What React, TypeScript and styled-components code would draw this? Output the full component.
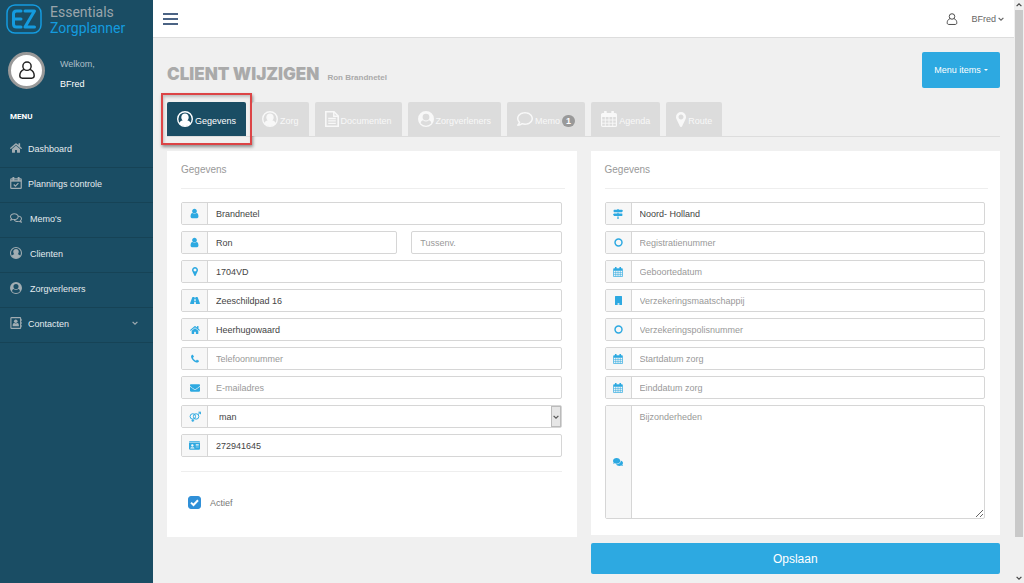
import React from 'react';
import styled, { createGlobalStyle, css } from 'styled-components';
import { FaHome, FaEnvelope, FaIdCard, FaMapSigns, FaComments, FaRegComments, FaRegComment } from 'react-icons/fa';

const sans = "'Liberation Sans', Arial, sans-serif";
const navy = '#1a4d64';
const blue = '#2da9e1';
const line = '#d6d6d6';

const GlobalStyle = createGlobalStyle`
  *, *::before, *::after { box-sizing: border-box; }
  body { margin: 0; background: #f0f0f0; font: 9px/12px ${sans}; color: #555; }
  button, input, select, textarea { font: inherit; color: inherit; margin: 0; }
  h1, h2, p { margin: 0; padding: 0; }
  a { color: inherit; text-decoration: none; }
  svg { display: block; flex: none; }
`;

/* ---------- icons ---------- */

type IconProps = { size?: number };

const UserIcon = ({ size = 11 }: IconProps) => (
  <svg width={size} height={size} viewBox="0 0 1792 1792" fill="currentColor">
    <path d="M1536 1399q0 109-62.5 187t-150.5 78h-854q-88 0-150.5-78t-62.5-187q0-85 8.5-160.5t31.5-152 58.5-131 94-89 134.5-34.5q131 128 313 128t313-128q76 0 134.5 34.5t94 89 58.5 131 31.5 152 8.5 160.5zm-256-887q0 159-112.5 271.5t-271.5 112.5-271.5-112.5-112.5-271.5 112.5-271.5 271.5-112.5 271.5 112.5 112.5 271.5z" />
  </svg>
);

const PinIcon = ({ size = 9 }: IconProps) => (
  <svg width={Math.round(size * 0.66)} height={size} viewBox="384 128 1024 1536" fill="currentColor">
    <path d="M1152 640q0-106-75-181t-181-75-181 75-75 181 75 181 181 75 181-75 75-181zm256 0q0 109-33 179l-364 774q-16 33-47.5 52t-67.5 19-67.5-19-46.5-52l-365-774q-33-70-33-179 0-212 150-362t362-150 362 150 150 362z" />
  </svg>
);

const RoadIcon = ({ size = 10 }: IconProps) => (
  <svg width={size} height={size - 1} viewBox="0 0 20 16" fill="currentColor">
    <path fillRule="evenodd" d="M5.500 1h3.700L9 3.500h2L10.800 1h3.700q.6 0 .9.700l4.400 11.800q.5 1.500-.8 1.500h-7.200l-.3-4.500H8.500L8.200 15H1q-1.300 0-.8-1.500L4.600 1.700Q4.900 1 5.500 1zM8.900 5.200L8.600 8.800h2.800L11.100 5.200z" />
  </svg>
);

const PhoneIcon = ({ size = 10 }: IconProps) => (
  <svg width={size} height={size} viewBox="0 0 1792 1792" fill="currentColor">
    <path d="M1600 1240q0 27-10 70.5t-21 68.5q-21 50-122 106-94 51-186 51-27 0-52.5-3.5t-57.5-12.5-47.5-14.5-55.5-20.5-49-18q-98-35-175-83-128-79-264.5-215.5t-215.5-264.5q-48-77-83-175-3-9-18-49t-20.5-55.5-14.5-47.5-12.5-57.5-3.5-52.5q0-92 51-186 56-101 106-122 25-11 68.5-21t70.5-10q14 0 21 3 18 6 53 76 11 19 30 54t35 63.5 31 53.5q3 4 17.5 25t21.5 35.5 7 28.5q0 20-28.5 50t-62 55-62 53-28.5 46q0 9 5 22.5t8.5 20.5 14 24 11.5 19q76 137 174 235t235 174q2 1 19 11.5t24 14 20.5 8.5 22.5 5q18 0 46-28.5t53-62 55-62 50-28.5q14 0 28.5 7t35.5 21.5 25 17.5q25 15 53.5 31t63.5 35 54 30q70 35 76 53 3 7 3 21z" />
  </svg>
);

const CalendarIcon = ({ size = 10 }: IconProps) => (
  <svg width={size} height={size} viewBox="0 0 16 16" fill="none" stroke="currentColor">
    <rect x="0.6" y="2.6" width="14.8" height="12.8" rx="1" strokeWidth="1.2" />
    <path d="M1 3h14v3H1z" fill="currentColor" stroke="none" />
    <path d="M4.3 6v9M8 6v9M11.7 6v9M1 9h14M1 12.2h14" strokeWidth="0.9" />
    <path d="M4.4 0.8v3.2M11.6 0.8v3.2" strokeWidth="2.6" strokeLinecap="round" />
  </svg>
);

const CalendarCheckIcon = ({ size = 12 }: IconProps) => (
  <svg width={size} height={size} viewBox="0 0 16 16" fill="none" stroke="currentColor">
    <rect x="1" y="2.6" width="14" height="12.6" rx="1" strokeWidth="1.6" />
    <path d="M1 5.2h14" strokeWidth="2" />
    <path d="M4.5 1v3M11.5 1v3" strokeWidth="2.6" strokeLinecap="round" />
    <path d="M5 10l2.2 2.3L11.2 8.2" strokeWidth="1.6" />
  </svg>
);

const UserRingIcon = ({ size = 16 }: IconProps) => (
  <svg width={size} height={size} viewBox="0 0 16 16" fill="currentColor">
    <circle cx="8" cy="8" r="7.3" fill="none" stroke="currentColor" strokeWidth="1.4" />
    <path d="M8 2.6c2.200 0 3.700 1.600 3.700 3.700 0 1.300-.5 2.400-1.300 3.200 1.900.3 3 1.300 3.400 2.900A7 7 0 0 1 8 14.900a7 7 0 0 1-5.800-2.500c.4-1.600 1.500-2.600 3.400-2.900C4.800 8.700 4.300 7.600 4.300 6.300c0-2.100 1.500-3.700 3.700-3.700z" />
  </svg>
);

const UserDiscIcon = ({ size = 16 }: IconProps) => (
  <svg width={size} height={size} viewBox="0 0 16 16" fill="currentColor">
    <path
      fillRule="evenodd"
      d="M8 0a8 8 0 1 1 0 16A8 8 0 0 1 8 0zM8 2.700a3.400 3.400 0 1 0 0 6.800 3.400 3.400 0 0 0 0-6.800zM5 9.300C3.500 9.600 2.900 10.800 2.700 12.300a6.900 6.900 0 0 0 10.600 0c-.2-1.500-.8-2.700-2.300-3a4.600 4.600 0 0 1-6 0z"
    />
  </svg>
);

const ContactBookIcon = ({ size = 12 }: IconProps) => (
  <svg width={size} height={size} viewBox="0 0 16 16" fill="none" stroke="currentColor">
    <rect x="1.2" y="0.8" width="13" height="14.4" rx="1" strokeWidth="1.5" />
    <path d="M15.300 3v2M15.300 7v2M15.300 11v2" strokeWidth="1" />
    <circle cx="7.700" cy="5.600" r="2.400" fill="currentColor" stroke="none" />
    <path d="M3.500 12.300c0-2.900.8-4.300 2-4.300 1.300.8 3.100.8 4.400 0 1.200 0 2 1.400 2 4.300z" fill="currentColor" stroke="none" />
  </svg>
);

const DocumentIcon = ({ size = 16 }: IconProps) => (
  <svg width={Math.round(size * 0.88)} height={size} viewBox="0 0 14 16" fill="none" stroke="currentColor">
    <path d="M0.800 0.800h8.200l4.200 4.200v10.200H0.800z" strokeWidth="1.600" />
    <path d="M8.800 0.800v4.400h4.400" strokeWidth="1.500" />
    <path d="M3.200 7.500h7.600M3.200 9.900h7.600M3.200 12.300h7.600" strokeWidth="1.300" />
  </svg>
);

const RingIcon = ({ size = 9 }: IconProps) => (
  <svg width={size} height={size} viewBox="0 0 16 16" fill="none" stroke="currentColor">
    <circle cx="8" cy="8" r="6.2" strokeWidth="2.6" />
  </svg>
);

const TabletIcon = ({ size = 9 }: IconProps) => (
  <svg width={size - 2} height={size} viewBox="0 0 14 18" fill="currentColor">
    <path fillRule="evenodd" d="M1 0h12q1 0 1 1v16q0 1-1 1H1q-1 0-1-1V1q0-1 1-1zM5.200 14.500v3h3.600v-3z" />
  </svg>
);

const GenderIcon = ({ size = 12 }: IconProps) => (
  <svg width={size} height={size} viewBox="0 0 22 20" fill="none" stroke="currentColor" strokeWidth="1.8">
    <circle cx="7" cy="9" r="5" />
    <circle cx="13" cy="9" r="5" />
    <path d="M7 14v5M4.500 16.700h5M16.500 5.500L21 1.200M17.300 1.200H21v3.700" />
  </svg>
);

const PersonOutlineIcon = ({ size = 12 }: IconProps) => (
  <svg width={size} height={size} viewBox="0 0 20 20" fill="none" stroke="currentColor" strokeWidth="1.6">
    <circle cx="10" cy="5.8" r="4.6" />
    <path d="M6.600 9.300C3.500 10.700 2 13.200 2 16.200c0 2 1 2.900 2.800 2.900h10.400c1.800 0 2.800-.9 2.800-2.900 0-3-1.500-5.500-4.600-6.900" />
  </svg>
);

const ChevronIcon = ({ size = 6 }: IconProps) => (
  <svg width={size} height={size} viewBox="0 0 6 6" fill="none" stroke="currentColor" strokeWidth="1.2">
    <path d="M0.600 1.800L3 4.200 5.400 1.800" />
  </svg>
);

const CheckIcon = () => (
  <svg width="9" height="9" viewBox="0 0 9 9" fill="none" stroke="#fff" strokeWidth="2">
    <path d="M1 4.600L3.500 7 8 2.200" />
  </svg>
);

const LogoMark = () => (
  <svg width="36" height="31" viewBox="0 0 36 31" fill="none" stroke="#149bdf" strokeLinejoin="round" strokeLinecap="round">
    <rect x="1" y="1" width="34" height="28" rx="8" strokeWidth="1.5" />
    <path d="M15 7H10.500Q7.500 7 7.500 10V20Q7.500 23 10.500 23H15M8 15H15" strokeWidth="3" />
    <path d="M19 7H28.500L19 23H28.500" strokeWidth="3" />
  </svg>
);

/* ---------- shell ---------- */

const Shell = styled.div`
  display: flex;
  min-height: 100vh;
`;

const Sidebar = styled.aside`
  flex: 0 0 153px;
  background: ${navy};
  color: #e4ecef;
`;

const Brand = styled.a`
  display: flex;
  gap: 8px;
  height: 40px;
  padding: 4px 0 0 6px;
`;

const BrandText = styled.span<{ $accent?: boolean }>`
  display: block;
  font: 14px/16px Roboto, sans-serif;
  color: ${p => (p.$accent ? '#149bdf' : '#9aa5ab')};
`;

const Profile = styled.div`
  display: flex;
  align-items: center;
  gap: 15px;
  height: 60px;
  padding: 0 8px;
`;

const Avatar = styled.span`
  display: grid;
  place-items: center;
  width: 37px;
  height: 37px;
  border: 3px solid #999;
  border-radius: 50%;
  background: #fff;
  color: #222;
`;

const Welcome = styled.p`
  line-height: 20px;
  padding-top: 7px;
  color: #aebfc8;
  strong { display: block; font-weight: 400; color: #fff; }
`;

const MenuTitle = styled.h2`
  height: 33px;
  padding-left: 10px;
  font: 700 8px/33px Roboto, sans-serif;
  color: #fff;
`;

const MenuLink = styled.a<{ $wide?: boolean }>`
  display: flex;
  align-items: center;
  gap: ${p => (p.$wide ? 8 : 6)}px;
  height: 35px;
  padding: 0 15px 2px 10px;
  border-bottom: 1px solid #164356;
  svg { color: #a2adb2; margin-bottom: 2px; }
  svg:last-child { margin-left: auto; }
`;

const Page = styled.div`
  flex: 1;
  min-width: 0;
`;

const TopBar = styled.header`
  display: flex;
  align-items: center;
  height: 38px;
  padding: 0 10px;
  border-bottom: 1px solid #ddd;
  background: #fff;
`;

const Burger = styled.button`
  display: grid;
  gap: 3px;
  width: 15px;
  padding: 0;
  border: 0;
  background: none;
  span { height: 2px; background: #4b6384; }
`;

const Account = styled.a`
  display: flex;
  align-items: center;
  gap: 2px;
  margin-left: 13px;
  color: #666;
`;

const AccountIcon = styled.span`
  margin-left: auto;
  color: #444;
`;

const Content = styled.main`
  padding: 14px 14px 8px;
`;

const Heading = styled.div`
  display: flex;
  justify-content: space-between;
  height: 50px;
`;

const Title = styled.h1`
  display: flex;
  align-items: baseline;
  gap: 8px;
  padding-top: 12px;
  font: 900 17px/20px Inter, sans-serif;
  color: #aaa;
  small { font: 700 8px/10px ${sans}; }
`;

const MenuButton = styled.button`
  display: flex;
  align-items: center;
  justify-content: center;
  gap: 3px;
  width: 78px;
  height: 36px;
  border: 0;
  border-radius: 2px;
  background: ${blue};
  color: #fff;
  &::after {
    content: '';
    border: 2px solid transparent;
    border-top-color: #fff;
    border-bottom: 0;
  }
`;

const Tabs = styled.nav`
  display: flex;
  gap: 6px;
  border-bottom: 1px solid #ddd;
`;

const TabItem = styled.div`
  position: relative;
`;

const Tab = styled.a<{ $active?: boolean }>`
  display: flex;
  align-items: flex-end;
  gap: 2px;
  height: 34px;
  padding: 0 10px 9px;
  border-radius: 2px 2px 0 0;
  background: ${p => (p.$active ? navy : '#dcdcdc')};
  color: ${p => (p.$active ? '#fff' : '#f8f8f8')};
  line-height: 11px;
`;

const Highlight = styled.span`
  position: absolute;
  inset: -9px -6px;
  border: 2px solid #dc4446;
  box-shadow: 1px 2px 3px rgba(0, 0, 0, 0.4), inset 1px 2px 3px rgba(0, 0, 0, 0.2);
  pointer-events: none;
`;

const Count = styled.span`
  min-width: 13px;
  border-radius: 6px;
  background: #999;
  color: #fff;
  font-weight: 700;
  line-height: 12px;
  text-align: center;
`;

const Columns = styled.form`
  display: grid;
  grid-template-columns: 1fr 1fr;
  align-items: start;
  gap: 14px;
  padding-top: 14px;
`;

const Panel = styled.section<{ $end?: number }>`
  padding: 0 15px ${p => p.$end ?? 16}px 14px;
  background: #fff;
`;

const PanelTitle = styled.h2`
  height: 38px;
  border-bottom: 1px solid #eee;
  margin: 0 -3px 13px 0;
  font: 10px/38px ${sans};
  color: #999;
`;

const Fields = styled.div`
  display: grid;
  gap: 6px;
`;

const Pair = styled.div`
  display: grid;
  grid-template-columns: 216fr 150fr;
  gap: 14px;
`;

const Group = styled.label`
  position: relative;
  display: flex;
  min-height: 23px;
  border: 1px solid ${line};
  border-radius: 2px;
  background: #fff;
`;

const AddOn = styled.span`
  display: grid;
  place-items: center;
  flex: 0 0 26px;
  border-right: 1px solid ${line};
  background: #f7f7f7;
  color: ${blue};
`;

const control = css`
  flex: 1;
  min-width: 0;
  border: 0;
  outline: 0;
  background: none;
  color: #444;
  &::placeholder { color: #999; opacity: 1; }
`;

const Input = styled.input`
  ${control}
  padding: 0 8px;
`;

const Select = styled.select`
  ${control}
  appearance: none;
  padding: 0 11px;
`;

const SelectArrow = styled.span`
  position: absolute;
  inset: 0 0 0 auto;
  display: grid;
  place-items: center;
  width: 10px;
  border: 1px solid #bbb;
  background: #e6e6e6;
  color: #555;
  pointer-events: none;
`;

const TextArea = styled.textarea`
  ${control}
  height: 112px;
  padding: 5px 8px;
  resize: vertical;
`;

const CheckRow = styled.label`
  display: flex;
  align-items: center;
  gap: 9px;
  margin-top: 14px;
  padding: 24px 7px 0;
  border-top: 1px solid #eee;
  color: #777;
`;

const CheckBox = styled.span`
  position: relative;
  width: 13px;
  height: 13px;
  input {
    display: block;
    appearance: none;
    width: 13px;
    height: 13px;
    border-radius: 3px;
    background: #fff;
    border: 1px solid #bbb;
  }
  input:checked { background: #3090d8; border-color: #3090d8; }
  svg { position: absolute; inset: 2px; pointer-events: none; }
  input:not(:checked) + svg { display: none; }
`;

const SaveButton = styled.button`
  width: 100%;
  height: 31px;
  margin-top: 8px;
  border: 0;
  border-radius: 2px;
  background: ${blue};
  color: #fff;
  font-size: 12px;
`;

const ScrollRail = styled.div`
  display: flex;
  flex-direction: column;
  align-items: center;
  flex: 0 0 10px;
  padding: 2px 0;
  background: #f0f0f0;
  color: #444;
`;

const ScrollThumb = styled.span`
  flex: 0 0 91%;
  width: 8px;
  margin: 2px 0 auto;
  background: #c9c9c9;
`;

const Flip = styled.span`
  transform: rotate(180deg);
`;

/* ---------- data ---------- */

const menu = [
  { label: 'Dashboard', icon: <FaHome size={12} /> },
  { label: 'Plannings controle', icon: <CalendarCheckIcon /> },
  { label: "Memo's", icon: <FaRegComments size={12} />, wide: true },
  { label: 'Clienten', icon: <UserRingIcon size={12} />, wide: true },
  { label: 'Zorgverleners', icon: <UserDiscIcon size={12} />, wide: true },
  { label: 'Contacten', icon: <ContactBookIcon />, more: true },
];

const tabs = [
  { label: 'Gegevens', icon: <UserRingIcon />, active: true },
  { label: 'Zorg', icon: <UserRingIcon /> },
  { label: 'Documenten', icon: <DocumentIcon /> },
  { label: 'Zorgverleners', icon: <UserDiscIcon /> },
  { label: 'Memo', icon: <FaRegComment size={16} />, count: 1 },
  { label: 'Agenda', icon: <CalendarIcon size={16} /> },
  { label: 'Route', icon: <PinIcon size={15} /> },
];

type FieldProps = { name: string; icon?: React.ReactNode; value?: string };

const Field = ({ name, icon, value }: FieldProps) => (
  <Group>
    {icon && <AddOn>{icon}</AddOn>}
    <Input aria-label={name} placeholder={name} defaultValue={value} />
  </Group>
);

export default function App() {
  return (
    <>
      <GlobalStyle />
      <Shell>
        <Sidebar>
          <Brand href="#">
            <LogoMark />
            <span>
              <BrandText>Essentials</BrandText>
              <BrandText $accent>Zorgplanner</BrandText>
            </span>
          </Brand>
          <Profile>
            <Avatar><PersonOutlineIcon size={18} /></Avatar>
            <Welcome>Welkom,<strong>BFred</strong></Welcome>
          </Profile>
          <MenuTitle>MENU</MenuTitle>
          <nav>
            {menu.map(m => (
              <MenuLink key={m.label} href="#" $wide={m.wide}>
                {m.icon}
                <span>{m.label}</span>
                {m.more && <ChevronIcon />}
              </MenuLink>
            ))}
          </nav>
        </Sidebar>
        <Page>
          <TopBar>
            <Burger type="button" aria-label="Menu"><span /><span /><span /></Burger>
            <AccountIcon><PersonOutlineIcon /></AccountIcon>
            <Account href="#">BFred <ChevronIcon /></Account>
          </TopBar>
          <Content>
            <Heading>
              <Title>CLIENT WIJZIGEN <small>Ron Brandnetel</small></Title>
              <MenuButton type="button">Menu items</MenuButton>
            </Heading>
            <Tabs>
              {tabs.map(t => (
                <TabItem key={t.label}>
                  <Tab href="#" $active={t.active}>
                    {t.icon}
                    <span>{t.label}</span>
                    {t.count && <Count>{t.count}</Count>}
                  </Tab>
                  {t.active && <Highlight />}
                </TabItem>
              ))}
            </Tabs>
            <Columns onSubmit={e => e.preventDefault()}>
              <Panel $end={28}>
                <PanelTitle>Gegevens</PanelTitle>
                <Fields>
                  <Field name="Achternaam" icon={<UserIcon />} value="Brandnetel" />
                  <Pair>
                    <Field name="Voornaam" icon={<UserIcon />} value="Ron" />
                    <Field name="Tussenv." />
                  </Pair>
                  <Field name="Postcode" icon={<PinIcon />} value="1704VD" />
                  <Field name="Adres" icon={<RoadIcon />} value="Zeeschildpad 16" />
                  <Field name="Woonplaats" icon={<FaHome size={10} />} value="Heerhugowaard" />
                  <Field name="Telefoonnummer" icon={<PhoneIcon />} />
                  <Field name="E-mailadres" icon={<FaEnvelope size={10} />} />
                  <Group>
                    <AddOn><GenderIcon /></AddOn>
                    <Select aria-label="Geslacht" defaultValue="man">
                      <option>man</option>
                      <option>vrouw</option>
                    </Select>
                    <SelectArrow><ChevronIcon /></SelectArrow>
                  </Group>
                  <Field name="BSN" icon={<FaIdCard size={11} />} value="272941645" />
                </Fields>
                <CheckRow>
                  <CheckBox><input type="checkbox" defaultChecked /><CheckIcon /></CheckBox>
                  Actief
                </CheckRow>
              </Panel>
              <div>
                <Panel>
                  <PanelTitle>Gegevens</PanelTitle>
                  <Fields>
                    <Field name="Provincie" icon={<FaMapSigns size={10} />} value="Noord- Holland" />
                    <Field name="Registratienummer" icon={<RingIcon />} />
                    <Field name="Geboortedatum" icon={<CalendarIcon />} />
                    <Field name="Verzekeringsmaatschappij" icon={<TabletIcon />} />
                    <Field name="Verzekeringspolisnummer" icon={<RingIcon />} />
                    <Field name="Startdatum zorg" icon={<CalendarIcon />} />
                    <Field name="Einddatum zorg" icon={<CalendarIcon />} />
                    <Group>
                      <AddOn><FaComments size={10} /></AddOn>
                      <TextArea aria-label="Bijzonderheden" placeholder="Bijzonderheden" />
                    </Group>
                  </Fields>
                </Panel>
                <SaveButton type="submit">Opslaan</SaveButton>
              </div>
            </Columns>
          </Content>
        </Page>
        <ScrollRail aria-hidden="true">
          <Flip><ChevronIcon /></Flip>
          <ScrollThumb />
          <ChevronIcon />
        </ScrollRail>
      </Shell>
    </>
  );
}
